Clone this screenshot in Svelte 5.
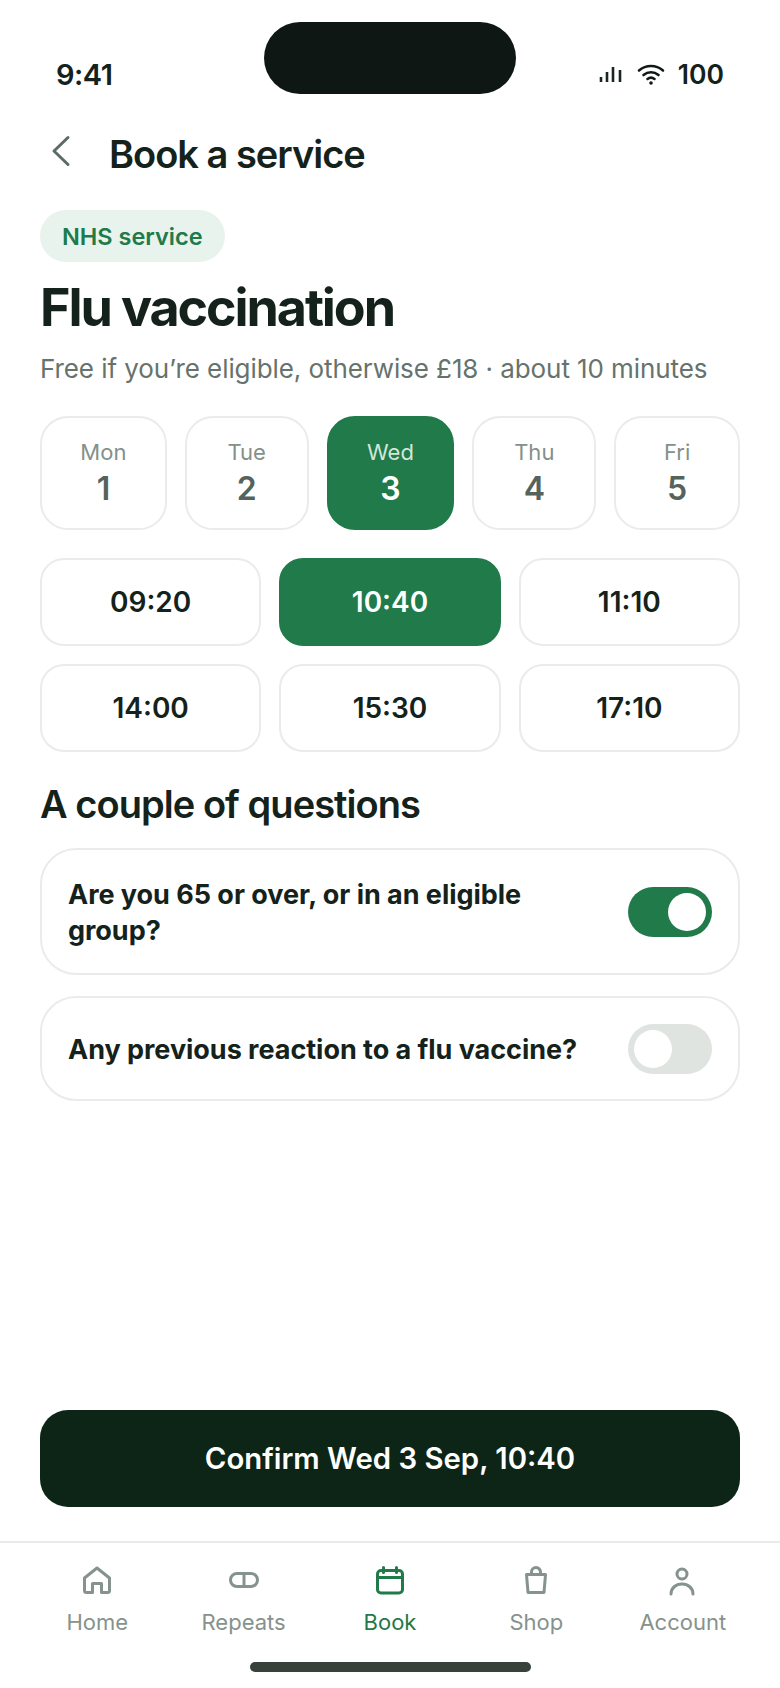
<script>
  const days = [
    { d: 'Mon', n: 1 }, { d: 'Tue', n: 2 }, { d: 'Wed', n: 3, on: true }, { d: 'Thu', n: 4 }, { d: 'Fri', n: 5 }
  ];
  const times = [
    { t: '09:20' }, { t: '10:40', on: true }, { t: '11:10' }, { t: '14:00' }, { t: '15:30' }, { t: '17:10' }
  ];
  const questions = [
    { q: 'Are you 65 or over, or in an eligible group?', on: true },
    { q: 'Any previous reaction to a flu vaccine?', on: false }
  ];
</script>

<div class="phone">
  <div class="island"></div>
  <header class="status">
    <span class="clock">9:41</span>
    <div class="status-right">
      <svg class="signal" width="24" height="20" viewBox="0 0 24 20" fill="none" stroke="#1a2620" stroke-width="2.6">
        <path d="M2 13v5M8 8v10M14 3v15M21 6v12" />
      </svg>
      <svg class="wifi" width="28" height="22" viewBox="0 0 28 22" fill="none" stroke="#101a15" stroke-width="2.6" stroke-linecap="round">
        <path d="M2 7.500C9 1.500 19 1.500 26 7.500" />
        <path d="M6.500 12C11 8.300 17 8.300 21.500 12" />
        <path d="M10.500 16C12.500 14.500 15.500 14.500 17.500 16" />
        <circle cx="14" cy="20" r="1.800" fill="#101a15" stroke="none" />
      </svg>
      <span class="batt">100</span>
    </div>
  </header>

  <div class="topbar">
    <svg class="back" width="22" height="32" viewBox="0 0 22 32" fill="none" stroke="#5c6b63" stroke-width="3" stroke-linecap="round" stroke-linejoin="round">
      <path d="M18 2.500 4 16l14 13.500" />
    </svg>
    <h2 class="title">Book a service</h2>
  </div>

  <main class="content">
    <span class="pill">NHS service</span>
    <h1>Flu vaccination</h1>
    <p class="sub">Free if you’re eligible, otherwise £18 · about 10 minutes</p>

    <div class="days">
      {#each days as day}
        <div class="day" class:on={day.on}>
          <span class="dname">{day.d}</span>
          <span class="dnum">{day.n}</span>
        </div>
      {/each}
    </div>

    <div class="times">
      {#each times as slot}
        <div class="time" class:on={slot.on}>{slot.t}</div>
      {/each}
    </div>

    <h3>A couple of questions</h3>

    <div class="questions">
      {#each questions as item}
        <div class="question">
          <span class="qtext">{item.q}</span>
          <span class="toggle" class:on={item.on}><span class="knob"></span></span>
        </div>
      {/each}
    </div>
  </main>

  <div class="cta-wrap">
    <button class="cta">Confirm Wed 3 Sep, 10:40</button>
  </div>

  <nav class="tabs">
    <div class="tab">
      <svg width="32" height="32" viewBox="0 0 32 32" fill="none" stroke="currentColor" stroke-width="3" stroke-linejoin="round">
        <path d="M3.500 13 16 3l12.500 10v12.500a2 2 0 0 1-2 2H20.500V18.500h-9v9H5.500a2 2 0 0 1-2-2Z" />
      </svg>
      <span>Home</span>
    </div>
    <div class="tab">
      <svg width="32" height="32" viewBox="0 0 32 32" fill="none" stroke="currentColor" stroke-width="3">
        <rect x="2.500" y="8.500" width="27" height="13" rx="6.500" />
        <path d="M16 8.500v13" />
      </svg>
      <span>Repeats</span>
    </div>
    <div class="tab active">
      <svg width="32" height="32" viewBox="0 0 32 32" fill="none" stroke="currentColor" stroke-width="3" stroke-linecap="round">
        <rect x="3.500" y="5.500" width="25" height="22.500" rx="3.500" />
        <path d="M3.500 12.500h25M9.500 2.500v5M22.500 2.500v5" />
      </svg>
      <span>Book</span>
    </div>
    <div class="tab">
      <svg width="32" height="32" viewBox="0 0 32 32" fill="none" stroke="currentColor" stroke-width="3" stroke-linejoin="round">
        <path d="M6.500 9.500h19l-1.500 18h-16Z" />
        <path d="M11.500 9.500V7a4.500 4.500 0 0 1 9 0v2.500" />
      </svg>
      <span>Shop</span>
    </div>
    <div class="tab">
      <svg width="32" height="32" viewBox="0 0 32 32" fill="none" stroke="currentColor" stroke-width="3" stroke-linecap="round">
        <circle cx="15" cy="9" r="5" />
        <path d="M4 29c0-6 5-10 11-10s11 4 11 10" />
      </svg>
      <span>Account</span>
    </div>
  </nav>
  <div class="home-wrap"><div class="home-bar"></div></div>
</div>

<style>
  :global(body) { margin: 0; background: #fff; }
  .phone {
    position: relative;
    width: 780px;
    height: 1688px;
    display: flex;
    flex-direction: column;
    background: #fff;
    font-family: Inter, "Liberation Sans", sans-serif;
    color: #14221b;
    overflow: hidden;
  }
  .island {
    position: absolute;
    left: 264px;
    top: 22px;
    width: 252px;
    height: 72px;
    border-radius: 36px;
    background: #0f1714;
  }
  .status {
    height: 42px;
    padding: 53px 56px 0;
    display: flex;
    justify-content: space-between;
    align-items: center;
  }
  .clock { font-size: 29px; font-weight: 600; letter-spacing: -0.5px; }
  .status-right { display: flex; align-items: center; }
  .signal { margin-right: 14px; }
  .wifi { margin-right: 13px; }
  .batt { font-size: 26.5px; font-weight: 600; }
  .topbar {
    display: flex;
    align-items: center;
    gap: 37px;
    padding: 37px 50px 0;
    height: 44px;
  }
  .back { flex: none; margin-top: -6px; }
  .title { margin: 0; font-size: 38px; font-weight: 600; letter-spacing: -1px; }
  .content { padding: 34px 40px 0; flex: 1; }
  .pill {
    display: inline-flex;
    align-items: center;
    height: 52px;
    padding: 0 22px;
    border-radius: 26px;
    background: #e9f3ee;
    color: #207a49;
    font-size: 23.5px;
    font-weight: 600;
    box-sizing: border-box;
  }
  h1 { margin: 14px 0 0; font-size: 52px; line-height: 64px; font-weight: 700; letter-spacing: -2.1px; }
  .sub { margin: 11px 0 0; font-size: 26px; line-height: 36px; color: #66736c; letter-spacing: -0.08px; }
  .days {
    display: grid;
    grid-template-columns: 127fr 124fr 128fr 124fr 126fr;
    gap: 18px;
    margin-top: 29px;
  }
  .day {
    height: 114px;
    box-sizing: border-box;
    border: 2px solid #e8ecea;
    border-radius: 28px;
    padding-bottom: 2px;
    display: flex;
    flex-direction: column;
    align-items: center;
    justify-content: center;
    gap: 4px;
    color: #55635c;
  }
  .dname { font-size: 22px; line-height: 30px; color: #84908a; }
  .dnum { font-size: 32px; line-height: 36px; font-weight: 600; }
  .day.on { background: #207a49; border-color: #207a49; color: #fff; }
  .day.on .dname { color: #d3e6da; }
  .times {
    display: grid;
    grid-template-columns: repeat(3, 1fr);
    gap: 18px;
    margin-top: 28px;
  }
  .time {
    height: 88px;
    box-sizing: border-box;
    border: 2px solid #e8ecea;
    border-radius: 24px;
    display: flex;
    align-items: center;
    justify-content: center;
    font-size: 28px;
    font-weight: 600;
  }
  .time.on { background: #207a49; border-color: #207a49; color: #fff; }
  h3 { margin: 28px 0 0; font-size: 38px; line-height: 48px; font-weight: 600; letter-spacing: -0.95px; }
  .questions { display: flex; flex-direction: column; gap: 21px; margin-top: 20px; }
  .question {
    box-sizing: border-box;
    border: 2px solid #e8ecea;
    border-radius: 36px;
    padding: 25.5px 26px;
    display: flex;
    align-items: center;
    justify-content: space-between;
    gap: 30px;
  }
  .qtext { font-size: 27px; line-height: 36px; font-weight: 700; flex: 1; letter-spacing: -0.03px; padding-top: 1.5px; margin-bottom: -1.5px; }
  .toggle {
    flex: none;
    width: 84px;
    height: 50px;
    border-radius: 25px;
    background: #dfe4e1;
    padding: 6px;
    box-sizing: border-box;
    display: flex;
  }
  .toggle.on { background: #207a49; justify-content: flex-end; }
  .knob { width: 38px; height: 38px; border-radius: 50%; background: #fff; }
  .cta-wrap { padding: 0 40px 34px; }
  .cta {
    width: 100%;
    height: 97px;
    border: 0;
    border-radius: 28px;
    background: #0c2516;
    color: #fff;
    font-family: inherit;
    font-size: 29.3px;
    font-weight: 600;
  }
  .tabs {
    border-top: 2px solid #e8ecea;
    height: 104px;
    padding: 22px 24px 0;
    display: grid;
    grid-template-columns: repeat(5, 1fr);
    box-sizing: border-box;
    color: #86928c;
  }
  .tab { display: flex; flex-direction: column; align-items: center; gap: 10px; }
  .tab span { font-size: 22px; line-height: 30px; }
  .tab.active { color: #207a49; }
  .home-wrap { height: 43px; display: flex; justify-content: center; padding-top: 17px; box-sizing: border-box; }
  .home-bar { width: 281px; height: 10px; border-radius: 5px; background: #36423a; }
</style>
